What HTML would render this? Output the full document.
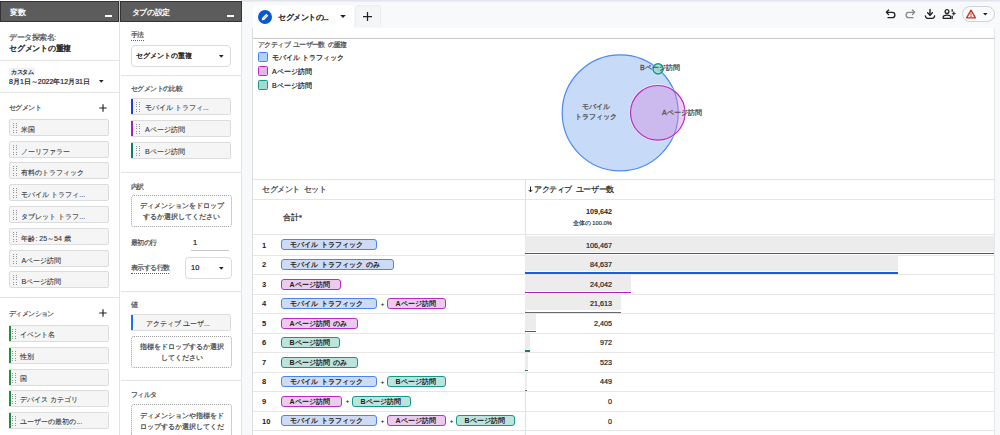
<!DOCTYPE html>
<html lang="ja">
<head>
<meta charset="utf-8">
<title>セグメントの重複</title>
<style>
*{box-sizing:border-box;margin:0;padding:0}
html,body{width:1000px;height:435px;overflow:hidden}
body{position:relative;background:#f8f9fa;font-family:"Liberation Sans",sans-serif;font-size:7px;color:#3c4043;line-height:1;-webkit-text-stroke:0.2px currentColor}
.abs{position:absolute}
.t{position:absolute;white-space:nowrap;line-height:12px;height:12px}
.topstrip{position:absolute;left:0;top:0;width:1000px;height:2px;background:linear-gradient(#e0e1ec,#eeeff5)}
/* panels */
.panel{position:absolute;top:0;height:435px;background:#fff}
#p1{left:0;width:119px}
#p2{left:120px;width:122px;border-right:1px solid #e3e4ef;border-left:1px solid #fff}
.gapline{position:absolute;left:119px;top:0;width:1.3px;height:435px;background:linear-gradient(#c9c9cd 0,#c9c9cd 22px,#e2e3ea 22px)}
.phead{position:absolute;top:1px;height:21px;background:#5c5c5c;border:1px solid #333;border-width:0.6px 0.7px 0.8px 0.7px}
.phead .ttl{-webkit-text-stroke:0;position:absolute;top:5px;color:#fff;font-weight:bold;font-size:8px;line-height:12px;letter-spacing:-0.4px;white-space:nowrap}
.phead .min{position:absolute;top:13.3px;width:7px;height:2px;background:#fff}
.sep{position:absolute;height:1px;background:#e3e3e3}
.lbl{color:#4a4d51}
.sl{font-size:7px;letter-spacing:-0.62px}
.dark{color:#202124}
.b{font-weight:bold;-webkit-text-stroke:0}
.chip{position:absolute;height:17px;background:#f5f5f5;border:1px solid #dcdcdc;border-radius:2px;font-size:7px;line-height:15px;color:#3c4043;white-space:nowrap;overflow:hidden}
.chip .h{position:absolute;left:2.6px;top:2.6px;width:4px;height:10px;background-image:repeating-linear-gradient(to bottom,#8e9398 0,#8e9398 1px,transparent 1px,transparent 2.2px);-webkit-mask-image:repeating-linear-gradient(to right,#000 0,#000 1.2px,transparent 1.2px,transparent 2.6px);mask-image:repeating-linear-gradient(to right,#000 0,#000 1.2px,transparent 1.2px,transparent 2.6px)}
.chip .x{position:absolute;left:11.4px;top:1px;color:#33363a;-webkit-text-stroke:0.1px #33363a}
.chip.seg .x{top:1.5px}
.chip.bar{border-left:none;border-top-left-radius:0;border-bottom-left-radius:0}
.chip.bar:before{content:"";position:absolute;left:0;top:-1px;bottom:-1px;width:1.6px;background:var(--c)}
.plus{position:absolute;width:7.4px;height:7.4px}
.plus:before{content:"";position:absolute;left:0;top:3.1px;width:7.4px;height:1.2px;background:#202124}
.plus:after{content:"";position:absolute;left:3.1px;top:0;width:1.2px;height:7.4px;background:#202124}
.tri{position:absolute;width:4.6px;height:2.7px;background:#202124;clip-path:polygon(0 0,100% 0,50% 100%)}
.drop{position:absolute;border:1px dotted #9e9e9e;border-radius:3px;text-align:center;color:#3c4043;font-size:7px;line-height:11px;white-space:nowrap}
.sel{position:absolute;border:1px solid #dadce0;border-radius:4px;background:#fff}
.dot{border-bottom:1px dotted #5f6368;padding-bottom:1.6px}
/* main */
.tab{position:absolute;left:253px;top:5px;width:101px;height:24px;background:#fff;border-radius:4px 4px 0 0}
.tab2{position:absolute;left:355px;top:5px;width:26px;height:22px;background:#f4f5f7;border:1px solid #ecedf0;border-bottom:none;border-radius:4px 4px 0 0}
.card{position:absolute;left:252px;top:28px;width:743px;height:407px;background:#fff;border-left:1px solid #dcdee1;border-right:1px solid #e6e7ec;border-radius:0 2px 0 0}
.hline{position:absolute;height:1px;background:#e5e5e5}
.row-n{-webkit-text-stroke:0;position:absolute;left:262px;font-weight:bold;font-size:7.5px;color:#202124;line-height:12px}
.sc{-webkit-text-stroke:0;word-spacing:1.2px;position:absolute;height:11px;border-radius:3px;border:1px solid;font-size:7px;font-weight:bold;color:#202124;line-height:9px;text-align:left;padding-left:7.5px;white-space:nowrap;overflow:hidden}
.sc.m{background:#cddbf4;border-color:#4a86ee}
.sc.a{background:#ebccee;border-color:#b92cc6}
.sc.bb{background:#bce4dc;border-color:#13988a}
.pl{-webkit-text-stroke:0;position:absolute;font-size:6px;font-weight:bold;color:#202124;line-height:12px}
.val{position:absolute;right:388px;font-size:7.2px;color:#202124;line-height:12px;text-align:right;white-space:nowrap;font-weight:bold}
.barbg{position:absolute;left:525.4px;height:16px;background:#ececec}
.barln{position:absolute;left:525.4px;height:1.4px}
</style>
</head>
<body>
<div class="topstrip"></div>

<!-- PANEL 1 -->
<div class="panel" id="p1">
  <div class="phead" style="left:0;width:118.6px"><span class="ttl" style="left:9px">変数</span><span class="min" style="left:104px"></span></div>
  <div class="t lbl" style="left:9px;top:32px;font-size:8px;letter-spacing:-0.5px">データ探索名:</div>
  <div class="t dark" style="left:9px;top:43.3px;font-size:8px;letter-spacing:-0.25px;-webkit-text-stroke:0.35px #202124">セグメントの重複</div>
  <div class="sep" style="left:0;top:60px;width:119px"></div>
  <div class="abs" style="left:9px;top:68px;height:8.4px;width:25.5px;background:#eef1f5;border-radius:1px"></div>
  <div class="t dark" style="left:11px;top:66.3px;font-size:6px;letter-spacing:-0.5px">カスタム</div>
  <div class="t dark" style="left:9px;top:76px;font-size:7px">8月1日～2022年12月31日</div>
  <div class="tri" style="left:99px;top:80px"></div>
  <div class="sep" style="left:0;top:92px;width:119px"></div>
  <div class="t lbl sl" style="left:9px;top:102px">セグメント</div>
  <svg class="abs" style="left:98.6px;top:103.8px" width="8" height="8" viewBox="0 0 8 8" stroke="#202124" stroke-width="1.15" fill="none"><path d="M4 0.3 V7.7 M0.3 4 H7.7"/></svg>
  <div class="chip seg" style="left:9px;top:119px;width:100px"><i class="h"></i><span class="x">米国</span></div>
  <div class="chip seg" style="left:9px;top:141px;width:100px"><i class="h"></i><span class="x">ノーリファラー</span></div>
  <div class="chip seg" style="left:9px;top:162px;width:100px"><i class="h"></i><span class="x">有料のトラフィック</span></div>
  <div class="chip seg" style="left:9px;top:184px;width:100px"><i class="h"></i><span class="x">モバイル トラフィ...</span></div>
  <div class="chip seg" style="left:9px;top:206px;width:100px"><i class="h"></i><span class="x">タブレット トラフ...</span></div>
  <div class="chip seg" style="left:9px;top:228px;width:100px"><i class="h"></i><span class="x">年齢: 25～54 歳</span></div>
  <div class="chip seg" style="left:9px;top:250px;width:100px"><i class="h"></i><span class="x">Aページ訪問</span></div>
  <div class="chip seg" style="left:9px;top:271px;width:100px"><i class="h"></i><span class="x">Bページ訪問</span></div>
  <div class="sep" style="left:0;top:297px;width:119px"></div>
  <div class="t lbl sl" style="left:9px;top:308px">ディメンション</div>
  <svg class="abs" style="left:98.6px;top:309.4px" width="8" height="8" viewBox="0 0 8 8" stroke="#202124" stroke-width="1.15" fill="none"><path d="M4 0.3 V7.7 M0.3 4 H7.7"/></svg>
  <div class="chip bar" style="--c:#1e8e3e;left:9px;top:325px;width:100px"><i class="h"></i><span class="x">イベント名</span></div>
  <div class="chip bar" style="--c:#1e8e3e;left:9px;top:347px;width:100px"><i class="h"></i><span class="x">性別</span></div>
  <div class="chip bar" style="--c:#1e8e3e;left:9px;top:369px;width:100px"><i class="h"></i><span class="x">国</span></div>
  <div class="chip bar" style="--c:#1e8e3e;left:9px;top:390px;width:100px"><i class="h"></i><span class="x">デバイス カテゴリ</span></div>
  <div class="chip bar" style="--c:#1e8e3e;left:9px;top:412px;width:100px"><i class="h"></i><span class="x">ユーザーの最初の...</span></div>
</div>

<div class="gapline"></div>
<!-- PANEL 2 -->
<div class="panel" id="p2">
  <div class="phead" style="left:-0.6px;width:121.2px"><span class="ttl" style="left:10.4px">タブの設定</span><span class="min" style="left:106px"></span></div>
  <div class="t lbl sl" style="left:10px;top:29px"><span class="dot">手法</span></div>
  <div class="sel" style="left:10px;top:45px;width:100px;height:22px"></div>
  <div class="t dark" style="left:15.4px;top:50px;-webkit-text-stroke:0.3px #202124">セグメントの重複</div>
  <div class="tri" style="left:98px;top:55px"></div>
  <div class="sep" style="left:0;top:75px;width:120px"></div>
  <div class="t lbl sl" style="left:10px;top:83px">セグメントの比較</div>
  <div class="chip bar" style="--c:#1a3fd6;left:10px;top:98px;width:100px"><i class="h" style="left:5.4px"></i><span class="x" style="left:14px">モバイル トラフィ...</span></div>
  <div class="chip bar" style="--c:#9c27b0;left:10px;top:120px;width:100px"><i class="h" style="left:5.4px"></i><span class="x" style="left:14px">Aページ訪問</span></div>
  <div class="chip bar" style="--c:#0b8070;left:10px;top:142px;width:100px"><i class="h" style="left:5.4px"></i><span class="x" style="left:14px">Bページ訪問</span></div>
  <div class="sep" style="left:0;top:172px;width:120px"></div>
  <div class="t lbl sl" style="left:10px;top:181px">内訳</div>
  <div class="drop" style="left:10px;top:195px;width:101px;height:32px;padding-top:4px">ディメンションをドロップ<br>するか選択してください</div>
  <div class="t lbl sl" style="left:10px;top:237px">最初の行</div>
  <div class="t dark" style="left:72px;top:237px;font-size:7.5px">1</div>
  <div class="abs" style="left:70px;top:250px;width:38px;height:1px;background:#c4c7c5"></div>
  <div class="t lbl sl" style="left:10px;top:262px"><span class="dot">表示する行数</span></div>
  <div class="sel" style="left:64px;top:257px;width:47px;height:22px"></div>
  <div class="t dark" style="left:70px;top:262px;font-size:7.5px">10</div>
  <div class="tri" style="left:98px;top:267px"></div>
  <div class="sep" style="left:0;top:291px;width:120px"></div>
  <div class="t lbl sl" style="left:10px;top:299px">値</div>
  <div class="chip bar" style="--c:#1a73e8;left:10px;top:314px;width:100px"><span class="x" style="left:15px">アクティブ ユーザ...</span></div>
  <div class="drop" style="left:10px;top:336px;width:101px;height:32px;padding-top:4px">指標をドロップするか選択<br>してください</div>
  <div class="sep" style="left:0;top:380px;width:120px"></div>
  <div class="t lbl sl" style="left:10px;top:389px">フィルタ</div>
  <div class="drop" style="left:10px;top:404px;width:101px;height:40px;padding-top:5px">ディメンションや指標をド<br>ロップするか選択してくだ<br>さい</div>
</div>

<!-- MAIN -->
<div class="tab"></div>
<div class="tab2"></div>
<svg class="abs" style="left:363px;top:12px" width="9" height="9" viewBox="0 0 9 9" stroke="#202124" stroke-width="1.25" fill="none"><path d="M4.5 0 V9 M0 4.5 H9"/></svg>
<svg class="abs" style="left:258px;top:10px" width="14" height="14" viewBox="0 0 14 14"><circle cx="7" cy="7" r="7" fill="#0b57d0"/><path d="M3.7 10.3 L4.1 7.9 L8.3 3.7 L10.3 5.7 L6.1 9.9 Z" fill="#fff"/><path d="M5.2 8.8 L8.9 5.1" stroke="#7fa6ee" stroke-width="0.7"/></svg>
<div class="t dark" style="left:278px;top:12px;font-size:8px;letter-spacing:-0.5px;-webkit-text-stroke:0.35px #202124">セグメントの...</div>
<div class="tri" style="left:340.2px;top:15px;width:5.6px;height:3px"></div>


<!-- toolbar icons -->
<svg class="abs" style="left:885px;top:8px" width="12" height="12" viewBox="0 0 12 12" fill="none" stroke="#202124" stroke-width="1.3" stroke-linecap="round" stroke-linejoin="round"><path d="M3.6 2 L1.4 4.3 L3.6 6.6"/><path d="M1.6 4.3 H7.2 A2.7 2.7 0 0 1 7.2 9.7 H3"/></svg>
<svg class="abs" style="left:904px;top:8px" width="12" height="12" viewBox="0 0 12 12" fill="none" stroke="#85898e" stroke-width="1.3" stroke-linecap="round" stroke-linejoin="round"><path d="M8.4 2 L10.6 4.3 L8.4 6.6"/><path d="M10.4 4.3 H4.8 A2.7 2.7 0 0 0 4.8 9.7 H9"/></svg>
<svg class="abs" style="left:924px;top:8px" width="12" height="12" viewBox="0 0 12 12" fill="none" stroke="#202124" stroke-width="1.4" stroke-linecap="round" stroke-linejoin="round"><path d="M6 1.5 V7"/><path d="M3.6 4.8 L6 7.2 L8.4 4.8"/><path d="M1.4 8 C1.8 10.4 3 10.4 6 10.4 C9 10.4 10.2 10.4 10.6 8"/></svg>
<svg class="abs" style="left:942px;top:8px" width="15" height="12" viewBox="0 0 15 12" fill="none" stroke="#202124" stroke-width="1.3" stroke-linejoin="round"><circle cx="5" cy="3.6" r="1.9"/><path d="M1.2 10.3 V9.4 C1.2 7.8 3.4 7.2 5 7.2 C6.6 7.2 8.8 7.8 8.8 9.4 V10.3 Z"/><path d="M10.2 1.6 V3.2 M10.2 8.2 V10.4" stroke-linecap="round"/><path d="M11.8 3.6 L12.3 5 L13.7 5.5 L12.3 6 L11.8 7.4 L11.3 6 L9.9 5.5 L11.3 5 Z" fill="#202124" stroke-width="0.4"/></svg>
<div class="abs" style="left:962px;top:6px;width:33px;height:16px;border:1px solid #d0d2d6;border-radius:8px;background:#fafbfc"></div>
<svg class="abs" style="left:965px;top:8px" width="12" height="12" viewBox="0 0 12 12" fill="none" stroke="#c5321b" stroke-width="1.3" stroke-linejoin="round"><path d="M6 2.2 L10.4 9.8 H1.6 Z"/><path d="M6 5.2 V7.2 M6 8.2 V8.6" stroke-width="1" stroke-linecap="round"/></svg>
<div class="tri" style="left:982.8px;top:12.8px;width:5px;height:2.8px"></div>

<div class="card"></div>
<div class="hline" style="left:253px;top:38px;width:742px;background:#c8c8c8"></div>

<div class="t lbl" style="left:258px;top:39px;font-size:7px;letter-spacing:-0.6px;word-spacing:1.5px">アクティブ ユーザー数 の重複</div>
<div class="abs" style="left:258px;top:52px;width:10px;height:10px;background:#b6d0f7;border:1px solid #4285f4;border-radius:1.5px"></div>
<div class="t dark" style="left:272px;top:52px;font-size:7px">モバイル トラフィック</div>
<div class="abs" style="left:258px;top:66px;width:10px;height:10px;background:#e3b8e8;border:1px solid #b92cc6;border-radius:1.5px"></div>
<div class="t dark" style="left:272px;top:66px;font-size:7px">Aページ訪問</div>
<div class="abs" style="left:258px;top:80px;width:10px;height:10px;background:#a5d8cf;border:1px solid #13988a;border-radius:1.5px"></div>
<div class="t dark" style="left:272px;top:80.3px;font-size:7px">Bページ訪問</div>

<!-- venn -->
<svg class="abs" style="left:540px;top:40px" width="200" height="140" viewBox="540 40 200 140">
  <circle cx="620.2" cy="112.8" r="58" fill="#c7dbf8" stroke="#4a8af4" stroke-width="1.2"/>
  <circle cx="657.8" cy="112.8" r="28.3" fill="none" stroke="#fff" stroke-opacity="0.55" stroke-width="1"/>
  <circle cx="657.8" cy="112.8" r="27.3" fill="#d58ae0" fill-opacity="0.42" stroke="#b92cc6" stroke-width="1.2"/>
  <circle cx="658.1" cy="68.9" r="6.2" fill="none" stroke="#fff" stroke-opacity="0.5" stroke-width="0.8"/>
  <circle cx="658.1" cy="68.9" r="5.1" fill="#9fd6cc" fill-opacity="0.8" stroke="#13988a" stroke-width="1.4"/>
</svg>
<div class="t" style="color:#555;-webkit-text-stroke:0.3px #555;left:566px;top:102px;width:60px;text-align:center;font-size:7px;line-height:10px;height:20px;white-space:normal">モバイル<br>トラフィック</div>
<div class="t" style="left:640px;top:61.7px;font-size:7px;color:#555;-webkit-text-stroke:0.3px #555">Bページ訪問</div>
<div class="t" style="left:662px;top:107.3px;font-size:7px;color:#555;-webkit-text-stroke:0.3px #555">Aページ訪問</div>

<!-- table -->
<div class="hline" style="left:253px;top:178.5px;width:742px;background:#e2e3e5"></div>
<div class="t" style="left:262px;top:184px;font-size:8px;letter-spacing:-0.4px;word-spacing:2px;color:#3c4043">セグメント セット</div>
<svg class="abs" style="left:528px;top:186px" width="5" height="7" viewBox="0 0 5 7" fill="none" stroke="#202124" stroke-width="1"><path d="M2.5 0.5 V5.8 M0.6 3.9 L2.5 5.9 L4.4 3.9"/></svg>
<div class="t" style="left:534px;top:184px;font-size:8px;letter-spacing:-0.4px;word-spacing:2px;color:#202124">アクティブ ユーザー数</div>
<div class="hline" style="left:253px;top:199px;width:742px"></div>
<div class="abs" style="left:525px;top:179px;width:1px;height:256px;background:#e0e0e0"></div>
<div class="t dark" style="left:283px;top:212px;font-size:7.5px">合計*</div>
<div class="val" style="top:206px;-webkit-text-stroke:0">109,642</div>
<div class="val" style="top:217px;font-size:5.8px;font-weight:normal;color:#3c4043">全体の 100.0%</div>
<div class="hline" style="left:253px;top:234px;width:742px"></div>

<div id="rows">
<div class="hline" style="left:253px;top:254.5px;width:742px;background:#e6e6e6"></div>
<div class="hline" style="left:253px;top:274.0px;width:742px;background:#e6e6e6"></div>
<div class="hline" style="left:253px;top:293.6px;width:742px;background:#e6e6e6"></div>
<div class="hline" style="left:253px;top:313.1px;width:742px;background:#e6e6e6"></div>
<div class="hline" style="left:253px;top:332.7px;width:742px;background:#e6e6e6"></div>
<div class="hline" style="left:253px;top:352.2px;width:742px;background:#e6e6e6"></div>
<div class="hline" style="left:253px;top:371.8px;width:742px;background:#e6e6e6"></div>
<div class="hline" style="left:253px;top:391.3px;width:742px;background:#e6e6e6"></div>
<div class="hline" style="left:253px;top:410.9px;width:742px;background:#e6e6e6"></div>
<div class="hline" style="left:253px;top:430.4px;width:742px;background:#e6e6e6"></div>
<div class="row-n" style="top:239.6px">1</div>
<div class="sc m" style="left:281.0px;top:239.4px;width:96px">モバイル トラフィック</div>
<div class="barbg" style="top:235.6px;width:469.0px"></div>
<div class="barln" style="top:252.7px;width:469.0px;height:1.4px;background:#1a5ce0"></div>
<div class="val" style="top:239.6px;font-weight:normal">106,467</div>
<div class="row-n" style="top:259.1px">2</div>
<div class="sc m" style="left:281.0px;top:258.9px;width:113px">モバイル トラフィック のみ</div>
<div class="barbg" style="top:255.2px;width:372.8px"></div>
<div class="barln" style="top:272.2px;width:372.8px;height:1.4px;background:#1a5ce0"></div>
<div class="val" style="top:259.1px;font-weight:normal">84,637</div>
<div class="row-n" style="top:278.7px">3</div>
<div class="sc a" style="left:281.0px;top:278.5px;width:60px">Aページ訪問</div>
<div class="barbg" style="top:274.7px;width:105.9px"></div>
<div class="barln" style="top:291.8px;width:105.9px;height:1.4px;background:#a823b5"></div>
<div class="val" style="top:278.7px;font-weight:normal">24,042</div>
<div class="row-n" style="top:298.2px">4</div>
<div class="sc m" style="left:281.0px;top:298.0px;width:96px">モバイル トラフィック</div>
<div class="pl" style="left:380.8px;top:297.5px">+</div>
<div class="sc a" style="left:387.0px;top:298.0px;width:59px">Aページ訪問</div>
<div class="barbg" style="top:294.2px;width:95.2px"></div>
<div class="barln" style="top:311.7px;width:95.2px;height:1.0px;background:#66696d"></div>
<div class="val" style="top:298.2px;font-weight:normal">21,613</div>
<div class="row-n" style="top:317.8px">5</div>
<div class="sc a" style="left:281.0px;top:317.6px;width:77px">Aページ訪問 のみ</div>
<div class="barbg" style="top:313.8px;width:10.6px"></div>
<div class="barln" style="top:330.9px;width:10.6px;height:1.4px;background:#a823b5"></div>
<div class="val" style="top:317.8px;font-weight:normal">2,405</div>
<div class="row-n" style="top:337.3px">6</div>
<div class="sc bb" style="left:281.0px;top:337.1px;width:59px">Bページ訪問</div>
<div class="barbg" style="top:333.3px;width:4.3px"></div>
<div class="barln" style="top:350.4px;width:4.3px;height:1.4px;background:#0b8070"></div>
<div class="val" style="top:337.3px;font-weight:normal">972</div>
<div class="row-n" style="top:356.9px">7</div>
<div class="sc bb" style="left:281.0px;top:356.7px;width:77px">Bページ訪問 のみ</div>
<div class="barbg" style="top:352.9px;width:2.3px"></div>
<div class="barln" style="top:370.0px;width:2.3px;height:1.4px;background:#0b8070"></div>
<div class="val" style="top:356.9px;font-weight:normal">523</div>
<div class="row-n" style="top:376.4px">8</div>
<div class="sc m" style="left:281.0px;top:376.2px;width:96px">モバイル トラフィック</div>
<div class="pl" style="left:380.8px;top:375.7px">+</div>
<div class="sc bb" style="left:387.0px;top:376.2px;width:59px">Bページ訪問</div>
<div class="barbg" style="top:372.4px;width:2.0px"></div>
<div class="barln" style="top:389.9px;width:2.0px;height:1.0px;background:#66696d"></div>
<div class="val" style="top:376.4px;font-weight:normal">449</div>
<div class="row-n" style="top:396.0px">9</div>
<div class="sc a" style="left:281.0px;top:395.8px;width:61px">Aページ訪問</div>
<div class="pl" style="left:345.8px;top:395.3px">+</div>
<div class="sc bb" style="left:352.0px;top:395.8px;width:59px">Bページ訪問</div>
<div class="val" style="top:396.0px;font-weight:normal">0</div>
<div class="row-n" style="top:415.5px">10</div>
<div class="sc m" style="left:281.0px;top:415.3px;width:96px">モバイル トラフィック</div>
<div class="pl" style="left:380.8px;top:414.8px">+</div>
<div class="sc a" style="left:387.0px;top:415.3px;width:59px">Aページ訪問</div>
<div class="pl" style="left:449.8px;top:414.8px">+</div>
<div class="sc bb" style="left:456.0px;top:415.3px;width:59px">Bページ訪問</div>
<div class="val" style="top:415.5px;font-weight:normal">0</div>
</div>
</body>
</html>
